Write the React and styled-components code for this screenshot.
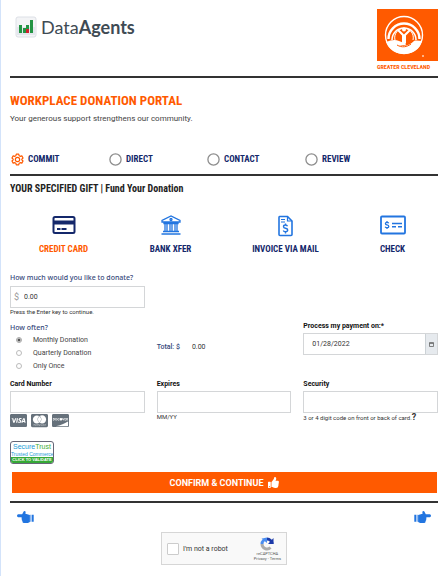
import React, { useState } from 'react';
import styled, { createGlobalStyle } from 'styled-components';
import { FaCcVisa, FaCcMastercard, FaCcDiscover, FaThumbsUp } from 'react-icons/fa';

const narrow = '"Roboto Condensed", "Liberation Sans Narrow", "Liberation Sans", sans-serif';
const orange = '#ff5a00';
const navy = '#14286b';
const blue = '#2275e0';

const GlobalStyle = createGlobalStyle`
  *, *::before, *::after { box-sizing: border-box; }
  body { margin: 0; background: #fff; color: #222; font: 400 7px/10px Roboto, sans-serif; }
  h1, h2, p, fieldset { margin: 0; padding: 0; border: 0; }
  button, input { font: inherit; color: inherit; }
  svg { display: block; flex: none; }
`;

const Page = styled.div`
  min-height: 100vh;
  border-left: 1px solid #d3e3fa;
  padding: 9px 8px 10px 9px;
`;

const Header = styled.header`
  display: flex;
  justify-content: space-between;
  align-items: flex-start;
  height: 67px;
`;

const Brand = styled.a`
  display: flex;
  align-items: center;
  gap: 4px;
  padding: 7px 0 0 5px;
  font: 400 18px/22px Lato, sans-serif;
  color: #3f4b54;
  text-decoration: none;
  strong { font-weight: 700; }
`;

const Partner = styled.div`
  width: 61px;
  font: 700 6px/8px ${narrow};
  color: ${orange};
  white-space: nowrap;
  svg { margin-bottom: 2px; }
`;

const Rule = styled.hr`
  margin: 0;
  border: 0;
  border-top: 2px solid #333;
`;

const Intro = styled.section`
  padding-top: 13px;
  height: 72px;
  p { font-size: 8px; line-height: 12px; color: #444; margin-top: 2px; }
`;

const Title = styled.h1`
  font: 700 13px/20px ${narrow};
  color: ${orange};
`;

const Steps = styled.nav`
  display: grid;
  grid-template-columns: repeat(4, 1fr);
  height: 24px;
  padding-right: 36px;
`;

const Step = styled.button`
  display: flex;
  align-items: center;
  gap: 4px;
  height: 18px;
  padding: 0 0 0 1px;
  border: 0;
  background: none;
  font: 700 9px/18px ${narrow};
  color: ${navy};
`;

const SubTitle = styled.h2`
  padding-top: 4px;
  font: 700 10px/18px ${narrow};
  color: #222;
`;

const Methods = styled.div`
  display: grid;
  grid-template-columns: 1fr 1fr;
  gap: 8px;
  margin: 17px -8px 0 0;
`;

const MethodPair = styled.div`
  display: grid;
  grid-template-columns: 1fr 1fr;
`;

const Method = styled.button`
  display: flex;
  flex-direction: column;
  align-items: center;
  gap: 6px;
  padding: 0;
  border: 0;
  background: none;
  font: 700 9px/16px ${narrow};
  color: ${p => (p.$active ? orange : navy)};
  white-space: nowrap;
`;

const Columns = styled.div`
  display: grid;
  grid-template-columns: repeat(3, 1fr);
  column-gap: 12px;
  margin-top: ${p => p.$top}px;
`;

const Label = styled.label`
  display: block;
  padding-bottom: ${p => (p.$strong ? 2 : 3)}px;
  font-family: ${p => (p.$strong ? 'Roboto' : '"Noto Sans"')}, sans-serif;
  font-weight: ${p => (p.$strong ? 700 : 500)};
  color: ${p => (p.$strong ? '#111' : '#34477a')};
  white-space: nowrap;
`;

const Box = styled.div`
  display: flex;
  align-items: center;
  height: 22px;
  border: 1px solid #d4d6d8;
  background: #fff;
  color: #333;
`;

const Currency = styled.span`
  width: 11px;
  text-align: center;
  font-size: 9px;
  color: #999;
`;

const Field = styled.input`
  flex: 1;
  min-width: 0;
  width: 100%;
  height: 100%;
  padding: 0 ${p => p.$pad || 2}px;
  border: 0;
  background: none;
  outline: 0;
`;

const DateButton = styled.button`
  display: grid;
  place-items: center;
  width: 12px;
  height: 100%;
  padding: 0;
  border: 0;
  border-left: 1px solid #ccd2d6;
  background: #e6eaee;
`;

const Note = styled.p`
  font-size: 6px;
  line-height: 8px;
  color: #333;
  white-space: nowrap;
  b { font-size: 9px; }
`;

const Legend = styled.legend`
  padding: 2px 0 0;
  font-family: "Noto Sans", sans-serif;
  font-weight: 500;
  color: #34477a;
`;

const Option = styled.label`
  display: flex;
  align-items: center;
  gap: 11px;
  height: 13px;
  padding-left: 6px;
  color: #444;
`;

const Radio = styled.input.attrs({ type: 'radio' })`
  appearance: none;
  width: 6px;
  height: 6px;
  margin: 0;
  border: 1px solid #bbb;
  border-radius: 50%;
  background: #fff;
  &:checked { border-color: #aaa; background: radial-gradient(#555 45%, #ddd 60%); }
`;

const Total = styled.div`
  display: flex;
  gap: 12px;
  padding-top: 21px;
  color: #333;
  span { font-weight: 500; color: #34477a; }
`;

const Cards = styled.div`
  display: flex;
  gap: 4px;
  margin-top: -1px;
  color: #66717b;
`;

const Seal = styled.a`
  display: block;
  width: 44px;
  height: 23px;
  margin-top: 12px;
  border: 1px solid #667;
  border-radius: 3px;
  overflow: hidden;
  text-align: center;
  text-decoration: none;
  white-space: nowrap;
  background: #fff;
  font: 400 5px/6px "Liberation Sans", sans-serif;
  color: #1b9ad6;
`;

const SealName = styled.div`
  font-weight: 400;
  font-size: 7px;
  line-height: 9px;
  em { font-style: normal; color: #3fae3a; }
`;

const SealBar = styled.div`
  background: #35a936;
  color: #fff;
  font-size: 4px;
  font-weight: 700;
`;

const Submit = styled.button`
  display: flex;
  justify-content: center;
  align-items: center;
  gap: 5px;
  width: calc(100% - 3px);
  height: 21px;
  margin: 8px 0 8px 2px;
  padding: 0;
  border: 0;
  background: ${orange};
  color: #fff;
  font-size: 9px;
  font-weight: 700;
`;

const Pager = styled.nav`
  display: flex;
  justify-content: space-between;
  padding: 8px 7px 0;
`;

const PageButton = styled.button`
  padding: 0;
  border: 0;
  background: none;
  color: ${blue};
`;

const Captcha = styled.section`
  display: flex;
  align-items: center;
  justify-content: space-between;
  width: 126px;
  height: 33px;
  margin: 9px auto 0;
  padding: 0 5px;
  border: 1px solid #d6d6d6;
  background: #f9f9f9;
`;

const Robot = styled.label`
  display: flex;
  align-items: center;
  gap: 4px;
  color: #333;
`;

const RobotCheck = styled.input.attrs({ type: 'checkbox' })`
  appearance: none;
  width: 12px;
  height: 12px;
  margin: 0;
  border: 1px solid #ccc;
  border-radius: 1px;
  background: #fff;
`;

const CaptchaBrand = styled.div`
  display: flex;
  flex-direction: column;
  align-items: center;
  font-size: 4px;
  line-height: 5px;
  color: #555;
  a { color: inherit; text-decoration: none; }
`;

const BarsLogo = () => (
  <svg width="22" height="22" viewBox="0 0 22 22">
    <rect x="1" y="1" width="20" height="20" rx="2" fill="#f3f4f6" stroke="#dde0e6" />
    <path d="M2 11h18v8H2z" fill="#e4e7ed" />
    <path d="M4 9h3v8H4zM8 12h3v5H8zM11 9h3v5h-3zM15 4h3v13h-3z" fill="#239443" />
    <path d="M11 13h3v4h-3z" fill="#d0202d" />
  </svg>
);

const HandLogo = () => (
  <svg width="61" height="52" viewBox="0 0 61 52">
    <path d="M0 0h61v52H0z" fill={orange} />
    <circle cx="27" cy="26" r="18.5" fill={orange} stroke="#fff" strokeWidth="1.4" />
    <g fill="none" stroke="#fff">
      <path d="M11.500 30a15.500 15.500 0 1 1 31 0" strokeWidth="2.400" />
      <path d="M15 31a12 12 0 1 1 24 0" strokeWidth="1.600" />
      <path d="M18 31a9.300 9.300 0 1 1 18 0" strokeWidth="1" />
    </g>
    <circle cx="27" cy="20.500" r="2" fill="#fff" />
    <path d="M21.500 21.500l4.500 4.500V33h2v-7l4.500-4.500" fill="none" stroke="#fff" strokeWidth="2" strokeLinecap="round" />
    <path d="M9 33c5-2 9-3 13-1l5 2c2 0 3 1 1 2l-6 0c6 2 11 0 15-4 2-1 5 0 8 0-2 8-9 13-18 13-8 0-15-4-18-12z" fill="#fff" />
    <path d="M20 36c5 3 10 2 14-1" fill="none" stroke={orange} strokeWidth="1" />
    <circle cx="46" cy="47" r="1" fill="#ffd0b0" />
  </svg>
);

const Gear = () => (
  <svg width="13" height="13" viewBox="0 0 24 24" fill="none" stroke={orange} strokeWidth="2.200" strokeLinejoin="round">
    <path d="M9.800 2h4.400l.8 3 2 1.200 3-.9 2.200 3.900-2.200 2.100v1.400l2.200 2.100-2.200 3.900-3-.9-2 1.200-.8 3H9.800L9 19l-2-1.200-3 .9-2.200-3.900L4 12.700v-1.400L1.800 9.200 4 5.300l3 .9L9 5z" />
    <circle cx="12" cy="12" r="4" />
  </svg>
);

const Ring = () => (
  <svg width="13" height="13" viewBox="0 0 13 13" fill="none" stroke="#8d8d8d" strokeWidth="1.300">
    <circle cx="6.500" cy="6.500" r="5.600" />
  </svg>
);

const CardIcon = () => (
  <svg width="24" height="20" viewBox="0 0 24 20">
    <rect x="1.500" y="2" width="21" height="16" rx="1.500" fill="#fff" stroke={navy} strokeWidth="2" />
    <path d="M2 5.500h20v4H2z" fill={navy} />
    <path d="M5 14h3.500M9.500 14h5" stroke={navy} strokeWidth="1.800" />
  </svg>
);

const BankIcon = () => (
  <svg width="22" height="20" viewBox="0 0 22 20" fill="none" stroke={blue} strokeWidth="1.300">
    <path d="M2 7V5.500L11 1l9 4.500V7zM3 16.500h16M1.500 19h19M4 7v1.500h14V7" />
    <path d="M5 9v7M7 9v7M10 9v7M12 9v7M15 9v7M17 9v7" />
    <circle cx="11" cy="4.500" r="1" />
  </svg>
);

const InvoiceIcon = () => (
  <svg width="17" height="22" viewBox="0 0 17 22" fill="none" stroke={blue} strokeWidth="1.600">
    <path d="M2.500 1.500h8l4.500 4.500v13.500q0 1-1 1h-11q-1 0-1-1v-17q0-1 .5-1z" />
    <path d="M10.500 1.500V6H15M4 4.500h4M4 7h4" strokeWidth="1.200" />
    <path d="M10.500 11.200q-.5-1.200-2-1.200-2 0-2 1.500t2 1.700q2.200.3 2.200 1.900t-2.200 1.600q-1.700 0-2.200-1.300M8.500 8.500V10M8.500 16.500v2" strokeWidth="1.400" />
  </svg>
);

const CheckIcon = () => (
  <svg width="26" height="20" viewBox="0 0 26 20" fill="none" stroke={blue} strokeWidth="1.800">
    <rect x="1" y="1.500" width="24" height="17" rx="1" />
    <path d="M8.700 8.200Q8.300 7.300 7 7.300q-1.600 0-1.600 1.200T7 9.900q1.800.2 1.800 1.500T7 12.700q-1.400 0-1.900-1M7 6v1.300M7 12.700V14" strokeWidth="1.300" />
    <path d="M12 8.500h10M12 11.800h4M18 11.800h4" strokeWidth="1.500" />
  </svg>
);

const Hand = ({ flip }) => (
  <svg width="17" height="12" viewBox="0 0 17 12" fill="currentColor">
    <g transform={flip ? 'matrix(-1 0 0 1 17 0)' : undefined}>
      <path d="M1.200 3.200h4L6.500.700q.6-.9 1.600-.4.700.4.500 1.200l-.2 1.200 4.500 1.300v7l-2 1H7q-1.500 0-1.500-1.300l-.2-.9q-.9-.7-.4-1.700-.6-.9-.2-1.900H1.200Q0 6 0 4.700t1.200-1.500z" />
      <path d="M13.500 3.800h.9v7h-.9zM15 3.800h1.700v7H15z" />
    </g>
  </svg>
);

const Calendar = () => (
  <svg width="5" height="5" viewBox="0 0 5 5">
    <path d="M.5.500h4v4h-4zM.5 1.500h4" fill="none" stroke="#666" strokeWidth=".8" />
  </svg>
);

const CaptchaIcon = () => (
  <svg width="14" height="14" viewBox="0 0 14 14" fill="none" strokeWidth="3">
    <path d="M2 7a5 5 0 0 1 5-5" stroke="#4a8df0" />
    <path d="M7 2a5 5 0 0 1 5 5" stroke="#1c3aa9" />
    <path d="M2 7a5 5 0 0 0 8.500 3.500" stroke="#ababab" />
    <path d="M13.500 1v6H8z" fill="#1c3aa9" />
    <path d="M1.500 1.500l5.500-.5v5z" fill="#4a8df0" />
  </svg>
);

const steps = ['COMMIT', 'DIRECT', 'CONTACT', 'REVIEW'];
const methods = [
  [['CREDIT CARD', CardIcon], ['BANK XFER', BankIcon]],
  [['INVOICE VIA MAIL', InvoiceIcon], ['CHECK', CheckIcon]],
];
const IconSlot = styled.span`
  display: grid;
  place-items: center;
  height: 20px;
`;

export default function App() {
  const [method, setMethod] = useState('CREDIT CARD');
  return (
    <Page>
      <GlobalStyle />
      <Header>
        <Brand href="#"><BarsLogo /><span>Data<strong>Agents</strong></span></Brand>
        <Partner><HandLogo />GREATER CLEVELAND</Partner>
      </Header>
      <Rule />
      <main>
        <Intro>
          <Title>WORKPLACE DONATION PORTAL</Title>
          <p>Your generous support strengthens our community.</p>
        </Intro>
        <Steps aria-label="Progress">
          {steps.map((name, i) => (
            <Step key={name} type="button" aria-current={i === 0 ? 'step' : undefined}>
              {i === 0 ? <Gear /> : <Ring />}{name}
            </Step>
          ))}
        </Steps>
        <Rule />
        <SubTitle>YOUR SPECIFIED GIFT | Fund Your Donation</SubTitle>
        <Methods>
          {methods.map((pair, i) => (
            <MethodPair key={i}>
              {pair.map(([name, Icon]) => (
                <Method key={name} type="button" $active={name === method} aria-pressed={name === method} onClick={() => setMethod(name)}>
                  <IconSlot><Icon /></IconSlot>{name}
                </Method>
              ))}
            </MethodPair>
          ))}
        </Methods>
        <Columns $top={16}>
          <div>
            <Label htmlFor="amount">How much would you like to donate?</Label>
            <Box><Currency>$</Currency><Field id="amount" defaultValue="0.00" /></Box>
            <Note>Press the Enter key to continue.</Note>
          </div>
        </Columns>
        <Columns $top={5}>
          <fieldset>
            <Legend>How often?</Legend>
            <Option><Radio name="often" defaultChecked />Monthly Donation</Option>
            <Option><Radio name="often" />Quarterly Donation</Option>
            <Option><Radio name="often" />Only Once</Option>
          </fieldset>
          <Total><span>Total: $</span>0.00</Total>
          <div>
            <Label $strong htmlFor="date">Process my payment on:*</Label>
            <Box>
              <Field id="date" $pad={8} defaultValue="01/28/2022" />
              <DateButton type="button" aria-label="Open calendar"><Calendar /></DateButton>
            </Box>
          </div>
        </Columns>
        <Columns $top={7}>
          <div>
            <Label $strong htmlFor="number">Card Number</Label>
            <Box><Field id="number" /></Box>
            <Cards><FaCcVisa size={17} /><FaCcMastercard size={17} /><FaCcDiscover size={17} /></Cards>
          </div>
          <div>
            <Label $strong htmlFor="expires">Expires</Label>
            <Box><Field id="expires" /></Box>
            <Note>MM/YY</Note>
          </div>
          <div>
            <Label $strong htmlFor="security">Security</Label>
            <Box><Field id="security" /></Box>
            <Note>3 or 4 digit code on front or back of card.<b>?</b></Note>
          </div>
        </Columns>
        <Seal href="#">
          <SealName>Secure<em>Trust</em></SealName>
          Trusted Commerce
          <SealBar>CLICK TO VALIDATE</SealBar>
        </Seal>
        <Submit type="button">CONFIRM &amp; CONTINUE <FaThumbsUp size={11} /></Submit>
      </main>
      <Rule />
      <Pager aria-label="Pages">
        <PageButton type="button" aria-label="Previous"><Hand /></PageButton>
        <PageButton type="button" aria-label="Next"><Hand flip /></PageButton>
      </Pager>
      <Captcha>
        <Robot><RobotCheck />I'm not a robot</Robot>
        <CaptchaBrand>
          <CaptchaIcon />
          <span>reCAPTCHA</span>
          <span><a href="#">Privacy</a> - <a href="#">Terms</a></span>
        </CaptchaBrand>
      </Captcha>
    </Page>
  );
}
